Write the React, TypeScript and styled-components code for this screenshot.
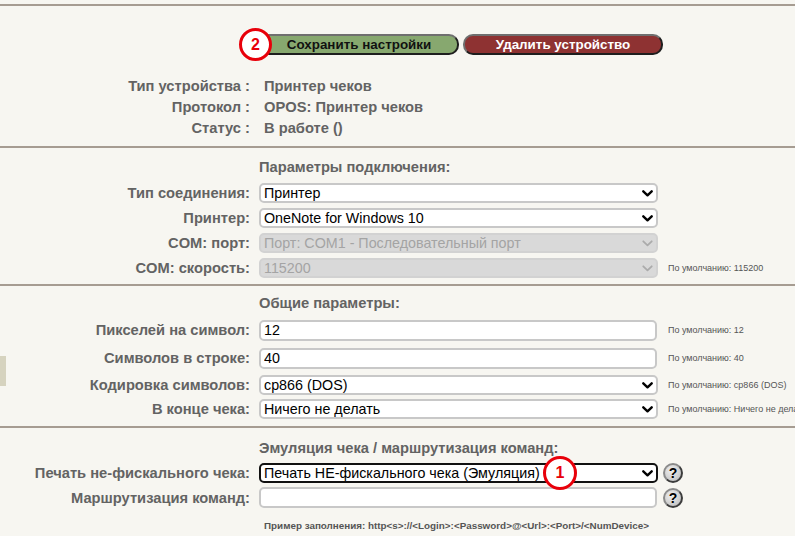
import React from 'react'
import styled, { createGlobalStyle } from 'styled-components'

const GlobalStyle = createGlobalStyle`
  html, body {
    margin: 0;
    padding: 0;
    background: #f7f6f1;
  }
  body {
    font-family: 'Liberation Sans', Arial, sans-serif;
  }
`

const Page = styled.div`
  width: 795px;
  height: 536px;
  overflow: hidden;
  box-sizing: border-box;
  padding-top: 4px;
  background: #f7f6f1;
`

const Section = styled.section<{ $pt: number; $pb: number }>`
  position: relative;
  display: flex;
  flex-direction: column;
  border-top: 2px solid #a69c92;
  padding: ${p => p.$pt}px 0 ${p => p.$pb}px;
`

const Row = styled.div<{ $h: number; $mt?: number }>`
  display: grid;
  grid-template-columns: 250px 399px 1fr;
  column-gap: 9px;
  align-items: center;
  height: ${p => p.$h}px;
  margin-top: ${p => p.$mt || 0}px;
`

const Label = styled.div`
  text-align: right;
  font-size: 14.7px;
  font-weight: bold;
  color: #636363;
  white-space: nowrap;
`

const Value = styled.div`
  padding-left: 5px;
  font-size: 14.7px;
  font-weight: bold;
  color: #636363;
  white-space: nowrap;
`

const Heading = styled.div`
  grid-column: 2 / 4;
  font-size: 14.7px;
  font-weight: bold;
  color: #636363;
  white-space: nowrap;
`

const Note = styled.div`
  padding-left: 1px;
  font-size: 9px;
  color: #555;
  white-space: nowrap;
`

const Example = styled.div`
  grid-column: 2 / 4;
  padding-left: 5px;
  font-size: 9.85px;
  font-weight: bold;
  color: #555;
  white-space: nowrap;
`

const Cell = styled.div`
  position: relative;
  display: flex;
  align-items: center;
  gap: 4px;
`

const ActionButton = styled.button<{ $kind: 'save' | 'delete' }>`
  flex: none;
  width: 200px;
  height: 21px;
  box-sizing: border-box;
  padding: 0;
  border: 2px solid;
  border-color: #6f6f6f #1e1e1e #1e1e1e #6f6f6f;
  border-radius: 10px;
  background: ${p => (p.$kind === 'save' ? '#87a86f' : '#8e3232')};
  color: ${p => (p.$kind === 'save' ? '#111' : '#fff')};
  font: bold 13.4px 'Liberation Sans', Arial, sans-serif;
  cursor: pointer;
`

const SelectWrap = styled.div`
  position: relative;
  width: 399px;
  height: 20px;
`

const Select = styled.select<{ $focus?: boolean }>`
  appearance: none;
  -webkit-appearance: none;
  width: 100%;
  height: 100%;
  box-sizing: border-box;
  margin: 0;
  padding: 0 22px 0 3px;
  border: 2px solid ${p => (p.$focus ? '#111' : '#c8c8c8')};
  border-radius: 5px;
  background: #fff;
  color: #000;
  font: 14.3px 'Liberation Sans', Arial, sans-serif;
  outline: none;

  &:disabled {
    background: #d9d9d9;
    border-color: #d2d2d2;
    color: #a4a4a4;
    opacity: 1;
  }
`

const Chevron = styled.svg`
  position: absolute;
  right: 5px;
  top: 7px;
  pointer-events: none;
`

const Input = styled.input`
  width: 398px;
  height: 21px;
  box-sizing: border-box;
  margin: 0;
  padding: 0 3px;
  border: 2px solid #c8c8c8;
  border-radius: 5px;
  background: #fff;
  color: #000;
  font: 14.3px 'Liberation Sans', Arial, sans-serif;
  outline: none;
`

const HelpButton = styled.button`
  width: 20px;
  height: 20px;
  margin-left: -4px;
  box-sizing: border-box;
  padding: 0;
  border: 2px solid;
  border-color: #8a8a8a #3c3c3c #3c3c3c #8a8a8a;
  border-radius: 50%;
  background: radial-gradient(circle at 40% 35%, #f0f0f0 0%, #cfcfcf 60%, #b4b4b4 100%);
  color: #000;
  font: bold 14px 'Liberation Sans', Arial, sans-serif;
  line-height: 16px;
  cursor: pointer;
`

const Marker = styled.div<{ $size: number; $x: number; $y: number }>`
  position: absolute;
  left: ${p => p.$x}px;
  top: ${p => p.$y}px;
  width: ${p => p.$size}px;
  height: ${p => p.$size}px;
  box-sizing: border-box;
  border: 3.5px solid #e8000a;
  border-radius: 50%;
  background: #fff;
  color: #e8000a;
  display: flex;
  align-items: center;
  justify-content: center;
  font: bold 16px 'Liberation Sans', Arial, sans-serif;
  z-index: 2;
`

const SideTab = styled.div`
  position: absolute;
  left: 0;
  top: 70px;
  width: 6px;
  height: 30px;
  background: #d6d3bf;
`

type SelectProps = {
  value: string
  disabled?: boolean
  focus?: boolean
}

const DropDown = ({ value, disabled, focus }: SelectProps) => (
  <SelectWrap>
    <Select defaultValue={value} disabled={disabled} $focus={focus}>
      <option value={value}>{value}</option>
    </Select>
    <Chevron width="11" height="7" viewBox="0 0 11 7">
      <path
        d="M1.3 1.3 L5.5 5.3 L9.7 1.3"
        fill="none"
        stroke={disabled ? '#ababab' : '#000'}
        strokeWidth={disabled ? 1.8 : 2.4}
        strokeLinecap="round"
        strokeLinejoin="round"
      />
    </Chevron>
  </SelectWrap>
)

const info = [
  ['Тип устройства :', 'Принтер чеков'],
  ['Протокол :', 'OPOS: Принтер чеков'],
  ['Статус :', 'В работе ()'],
]

export default function App() {
  return (
    <Page>
      <GlobalStyle />

      <Section $pt={28} $pb={8}>
        <Row $h={21}>
          <div />
          <Cell>
            <Marker $size={33} $x={-20} $y={-6}>2</Marker>
            <ActionButton $kind="save">Сохранить настройки</ActionButton>
            <ActionButton $kind="delete">Удалить устройство</ActionButton>
          </Cell>
        </Row>
        {info.map(([label, value], i) => (
          <Row key={label} $h={21} $mt={i === 0 ? 20 : 0}>
            <Label>{label}</Label>
            <Value>{value}</Value>
          </Row>
        ))}
      </Section>

      <Section $pt={9} $pb={4}>
        <Row $h={20}>
          <Heading>Параметры подключения:</Heading>
        </Row>
        <Row $h={25} $mt={3}>
          <Label>Тип соединения:</Label>
          <DropDown value="Принтер" />
        </Row>
        <Row $h={25}>
          <Label>Принтер:</Label>
          <DropDown value="OneNote for Windows 10" />
        </Row>
        <Row $h={25}>
          <Label>COM: порт:</Label>
          <DropDown value="Порт: COM1 - Последовательный порт" disabled />
        </Row>
        <Row $h={25}>
          <Label>COM: скорость:</Label>
          <DropDown value="115200" disabled />
          <Note>По умолчанию: 115200</Note>
        </Row>
      </Section>

      <Section $pt={7} $pb={5}>
        <SideTab />
        <Row $h={20}>
          <Heading>Общие параметры:</Heading>
        </Row>
        <Row $h={28} $mt={3}>
          <Label>Пикселей на символ:</Label>
          <Input defaultValue="12" />
          <Note>По умолчанию: 12</Note>
        </Row>
        <Row $h={28}>
          <Label>Символов в строке:</Label>
          <Input defaultValue="40" />
          <Note>По умолчанию: 40</Note>
        </Row>
        <Row $h={25}>
          <Label>Кодировка символов:</Label>
          <DropDown value="cp866 (DOS)" />
          <Note>По умолчанию: cp866 (DOS)</Note>
        </Row>
        <Row $h={24}>
          <Label>В конце чека:</Label>
          <DropDown value="Ничего не делать" />
          <Note>По умолчанию: Ничего не делать</Note>
        </Row>
      </Section>

      <Section $pt={10} $pb={0}>
        <Row $h={20}>
          <Heading>Эмуляция чека / маршрутизация команд:</Heading>
        </Row>
        <Row $h={25} $mt={2}>
          <Label>Печать не-фискального чека:</Label>
          <Cell>
            <DropDown value="Печать НЕ-фискального чека (Эмуляция)" focus />
            <Marker $size={34} $x={284} $y={-7}>1</Marker>
          </Cell>
          <Cell>
            <HelpButton>?</HelpButton>
          </Cell>
        </Row>
        <Row $h={25}>
          <Label>Маршрутизация команд:</Label>
          <Input />
          <Cell>
            <HelpButton>?</HelpButton>
          </Cell>
        </Row>
        <Row $h={20} $mt={5}>
          <Example>
            Пример заполнения: http&lt;s&gt;://&lt;Login&gt;:&lt;Password&gt;@&lt;Url&gt;:&lt;Port&gt;/&lt;NumDevice&gt;
          </Example>
        </Row>
      </Section>
    </Page>
  )
}
